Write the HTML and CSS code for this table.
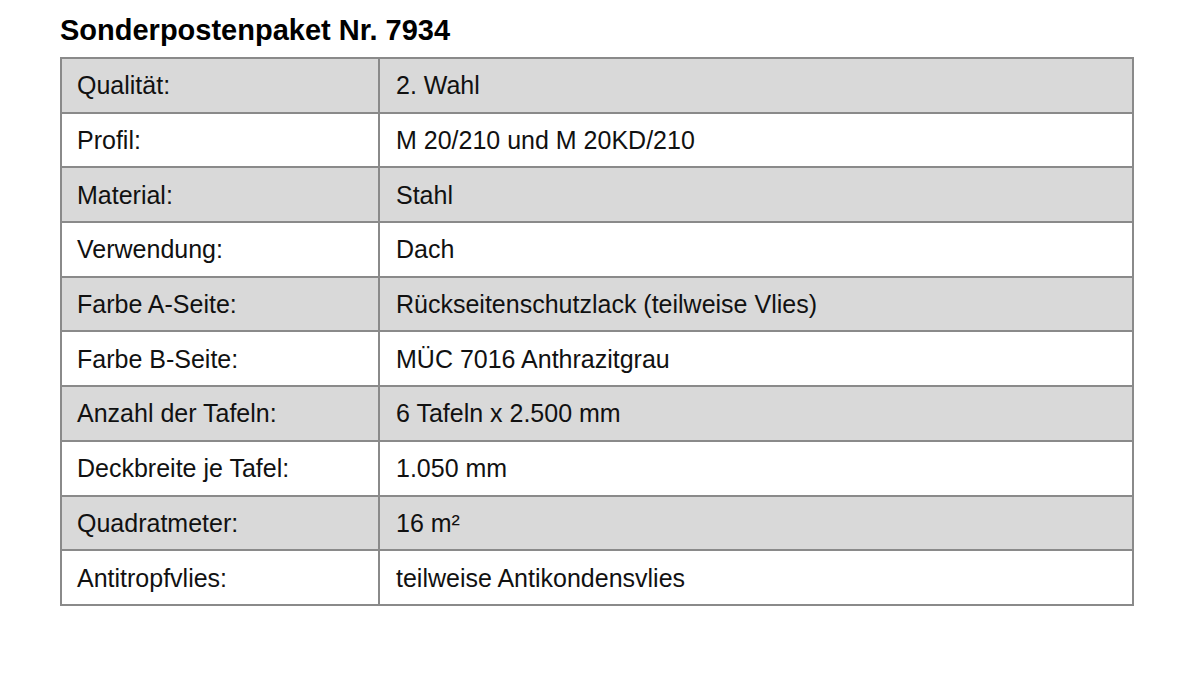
FILE: index.html
```html
<!DOCTYPE html>
<html lang="de">
<head>
<meta charset="utf-8">
<title>Sonderpostenpaket Nr. 7934</title>
<link rel="stylesheet" href="styles.css">
</head>
<body>
<main class="page">
  <h1 class="title">Sonderpostenpaket Nr. 7934</h1>
  <table class="specs">
    <tbody>
      <tr class="shaded"><td class="label">Qualität:</td><td class="value">2. Wahl</td></tr>
      <tr><td class="label">Profil:</td><td class="value">M 20/210 und M 20KD/210</td></tr>
      <tr class="shaded"><td class="label">Material:</td><td class="value">Stahl</td></tr>
      <tr><td class="label">Verwendung:</td><td class="value">Dach</td></tr>
      <tr class="shaded"><td class="label">Farbe A-Seite:</td><td class="value">Rückseitenschutzlack (teilweise Vlies)</td></tr>
      <tr><td class="label">Farbe B-Seite:</td><td class="value">MÜC 7016 Anthrazitgrau</td></tr>
      <tr class="shaded"><td class="label">Anzahl der Tafeln:</td><td class="value">6 Tafeln x 2.500 mm</td></tr>
      <tr><td class="label">Deckbreite je Tafel:</td><td class="value">1.050 mm</td></tr>
      <tr class="shaded"><td class="label">Quadratmeter:</td><td class="value">16 m²</td></tr>
      <tr><td class="label">Antitropfvlies:</td><td class="value">teilweise Antikondensvlies</td></tr>
    </tbody>
  </table>
</main>
</body>
</html>
```
FILE: styles.css
```css
html, body {
  margin: 0;
  padding: 0;
  background: #ffffff;
}
body {
  font-family: "Liberation Sans", Arial, sans-serif;
  color: #111111;
}
.page {
  padding: 13px 0 0 60px;
  width: 1074px;
}
.title {
  margin: 0 0 10px 0;
  font-size: 29px;
  font-weight: bold;
  line-height: 34px;
  color: #000;
}
.specs {
  width: 1074px;
  border-collapse: collapse;
  border: 2px solid #858585;
}
.specs td {
  border: 2px solid #8a8a8a;
  height: 54.7px;
  padding: 0 0 0 16px;
  font-size: 25px;
  line-height: 28px;
  vertical-align: middle;
  box-sizing: border-box;
}
.specs .label {
  width: 318px;
  padding-left: 15px;
}
.shaded td {
  background: #d9d9d9;
}
```
